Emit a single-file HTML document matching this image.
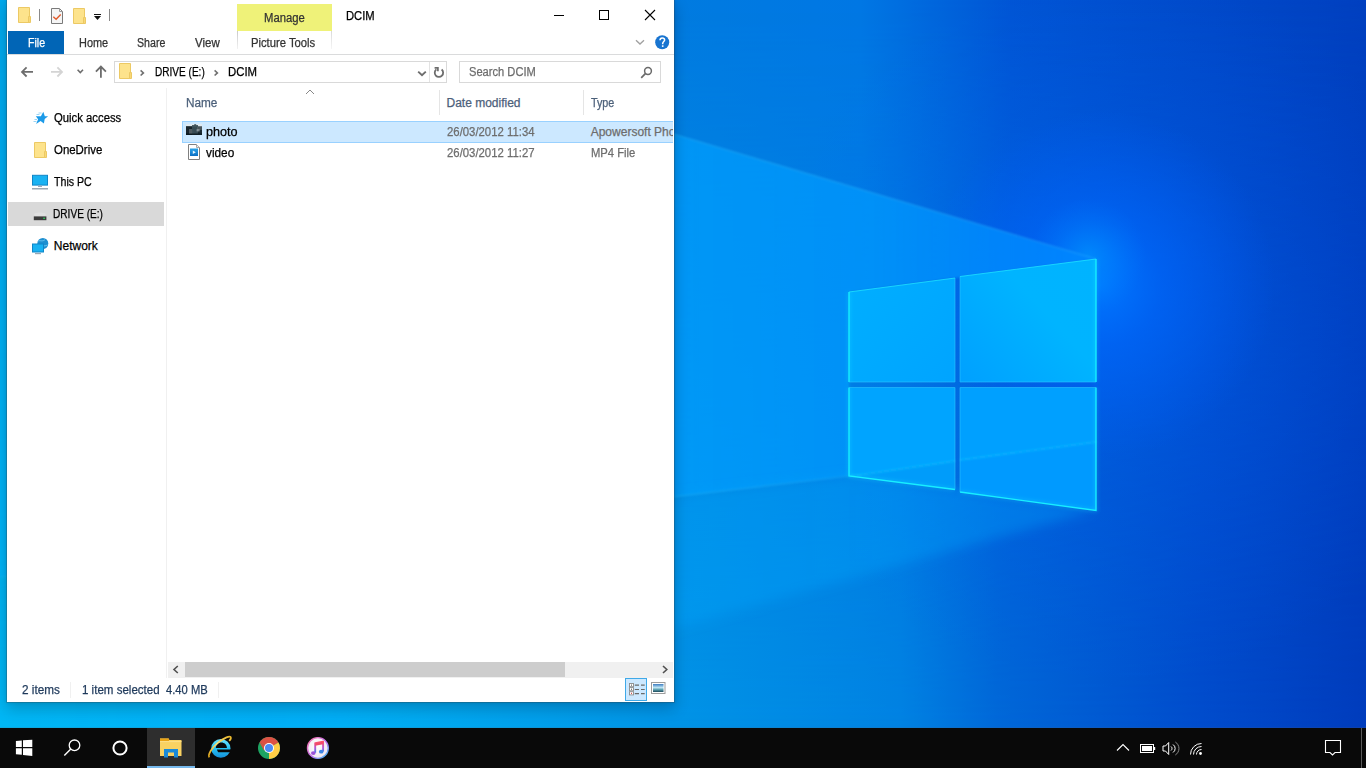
<!DOCTYPE html><html><head><meta charset="utf-8"><style>
*{margin:0;padding:0;box-sizing:border-box}
html,body{width:1366px;height:768px;overflow:hidden}
body{position:relative;font-family:"Liberation Sans",sans-serif;background:#0a5fd0}
.t{position:absolute;white-space:nowrap;line-height:12px;font-size:12px;transform-origin:0 0;-webkit-text-stroke:0.25px currentColor}
.a{position:absolute}
svg{position:absolute;overflow:visible}
</style></head><body>
<svg width="1366" height="728" viewBox="0 0 1366 728" style="left:0;top:0">
<defs>
 <linearGradient id="gTop" x1="0" y1="0" x2="1366" y2="0" gradientUnits="userSpaceOnUse">
  <stop offset="0" stop-color="#009cd8"/>
  <stop offset="0.49" stop-color="#007be0"/>
  <stop offset="0.63" stop-color="#0077e4"/>
  <stop offset="0.74" stop-color="#0055d5"/>
  <stop offset="1" stop-color="#0040c0"/>
 </linearGradient>
 <linearGradient id="gBot" x1="0" y1="0" x2="1366" y2="0" gradientUnits="userSpaceOnUse">
  <stop offset="0" stop-color="#00bcf2"/>
  <stop offset="0.25" stop-color="#00b0f4"/>
  <stop offset="0.49" stop-color="#0094e6"/>
  <stop offset="0.66" stop-color="#0082e2"/>
  <stop offset="0.73" stop-color="#0068d8"/>
  <stop offset="0.88" stop-color="#004ccc"/>
  <stop offset="1" stop-color="#003cbc"/>
 </linearGradient>
 <linearGradient id="mV" x1="0" y1="0" x2="0" y2="728" gradientUnits="userSpaceOnUse">
  <stop offset="0" stop-color="#fff" stop-opacity="0"/>
  <stop offset="1" stop-color="#fff" stop-opacity="1"/>
 </linearGradient>
 <mask id="mask1"><rect width="1366" height="728" fill="url(#mV)"/></mask>
 <radialGradient id="glow" cx="1100" cy="285" r="175" gradientUnits="userSpaceOnUse">
  <stop offset="0" stop-color="#0078ff" stop-opacity="1"/>
  <stop offset="0.35" stop-color="#0068ff" stop-opacity="0.6"/>
  <stop offset="1" stop-color="#0060ff" stop-opacity="0"/>
 </radialGradient>
 <radialGradient id="glow2" cx="1110" cy="330" r="360" gradientUnits="userSpaceOnUse">
  <stop offset="0" stop-color="#0070ff" stop-opacity="0.3"/>
  <stop offset="1" stop-color="#0060ff" stop-opacity="0"/>
 </radialGradient>
 <radialGradient id="glow3" cx="1088" cy="256" r="58" gradientUnits="userSpaceOnUse">
  <stop offset="0" stop-color="#00a0ff" stop-opacity="0.55"/>
  <stop offset="1" stop-color="#0080ff" stop-opacity="0"/>
 </radialGradient>
 <linearGradient id="beam1" x1="1096" y1="0" x2="0" y2="0" gradientUnits="userSpaceOnUse">
  <stop offset="0" stop-color="#0084ff" stop-opacity="0.85"/>
  <stop offset="0.2" stop-color="#009aff" stop-opacity="0.72"/>
  <stop offset="1" stop-color="#00b2ff" stop-opacity="0.55"/>
 </linearGradient>
 <linearGradient id="beam2" x1="1096" y1="0" x2="0" y2="0" gradientUnits="userSpaceOnUse">
  <stop offset="0" stop-color="#00a8ff" stop-opacity="0.35"/>
  <stop offset="1" stop-color="#00a8ff" stop-opacity="0.25"/>
 </linearGradient>
 <filter id="blur1" x="-10%" y="-10%" width="120%" height="120%"><feGaussianBlur stdDeviation="1.2"/></filter>
 <filter id="blur2" x="-10%" y="-10%" width="120%" height="120%"><feGaussianBlur stdDeviation="6"/></filter>
 <filter id="glowf" x="-10%" y="-10%" width="120%" height="120%"><feGaussianBlur stdDeviation="2"/></filter>
</defs>
<rect width="1366" height="728" fill="url(#gTop)"/>
<rect width="1366" height="728" fill="url(#gBot)" mask="url(#mask1)"/>
<rect width="1366" height="728" fill="url(#glow2)"/>
<rect width="1366" height="728" fill="url(#glow)"/>
<rect width="1366" height="728" fill="url(#glow3)"/>
<polygon points="1096,259 -20,-71 -20,579.4 849,476 849,292" fill="url(#beam1)" filter="url(#blur1)"/>
<polygon points="849,476 -20,579.4 -20,822.6 1096,510 955,489.5" fill="url(#beam2)" filter="url(#blur2)"/>
<path d="M1096,259 L0,-65" stroke="#40c8ff" stroke-width="1.2" opacity="0.35" filter="url(#blur1)"/>
<path d="M849,476 L0,577" stroke="#40c8ff" stroke-width="1.2" opacity="0.3" filter="url(#blur1)"/>
<!-- logo panes -->
<defs>
 <linearGradient id="pTR" x1="960" y1="382" x2="1096" y2="259" gradientUnits="userSpaceOnUse"><stop offset="0" stop-color="#00a0ff"/><stop offset="0.6" stop-color="#00b4ff"/><stop offset="1" stop-color="#00b3ff"/></linearGradient>
 <linearGradient id="pTL" x1="849" y1="292" x2="955" y2="382" gradientUnits="userSpaceOnUse"><stop offset="0" stop-color="#00aeff"/><stop offset="1" stop-color="#00a4ff"/></linearGradient>
</defs>
<polygon points="849,292 955,278 955,382 849,382" fill="url(#pTL)"/>
<polygon points="960,276.5 1096,259 1096,382 960,382" fill="url(#pTR)"/>
<polygon points="849,387.5 955,387.5 955,489.5 849,476" fill="#00a4ff"/>
<polygon points="960,387.5 1096,387.5 1096,510.5 960,492" fill="#00a0ff"/>
<polygon points="849,476 955,460.5 955,489.5" fill="#009cfa"/>
<polygon points="960,459.7 1096,441.5 1096,510.5 960,492" fill="#009aff"/>
<g stroke="#10beff" stroke-width="1.4" opacity="0.8" filter="url(#blur1)">
 <path d="M849,476.5 L955,461 M960,460 L1096,442"/>
</g>
<g fill="none" stroke="#20f0ff" stroke-width="2" filter="url(#glowf)" opacity="0.4">
 <path d="M849,382 V292 M1096,259 V382 M849,387.5 V476 L955,489.5 M960,492 L1096,510.5 V387.5"/>
</g>
<g fill="none" stroke="#18eeff" stroke-width="1.4">
 <path d="M849,382 V292 M1096,259 V382 M849,387.5 V476 L955,489.5 M960,492 L1096,510.5 V387.5"/>
</g>
<g fill="none" stroke="#20e8ff" stroke-width="1.1" opacity="0.75">
 <path d="M849,292 L955,278 M960,276.5 L1096,259"/>
</g>
<g fill="none" stroke="#30c8ff" stroke-width="1" opacity="0.55">
 <polyline points="955,278 955,382 849,382"/>
 <polyline points="960,276.5 960,382 1096,382"/>
 <polyline points="849,387.5 955,387.5 955,489.5"/>
 <polyline points="960,492 960,387.5 1096,387.5"/>
</g>
</svg>
<div class="a" style="left:6px;top:-1px;width:669px;height:704px;border:1px solid rgba(60,60,60,0.25);background:#fff;background-clip:padding-box;box-shadow:0 6px 14px rgba(0,0,0,0.2),0 0 3px rgba(0,0,0,0.08)"></div>
<!-- QAT -->
<svg width="16" height="17" style="left:17px;top:6px" viewBox="0 0 16 17">
 <path d="M1.5,1.5 h11 v15 h-11 z" fill="#fde38c" stroke="#ecc964" stroke-width="1"/>
 <path d="M11.5,10.5 h2 v6 h-2 z" fill="#f9d877" stroke="#ecc964" stroke-width="1"/>
</svg>
<div class="a" style="left:39px;top:9px;width:1px;height:12px;background:#8a8a8a"></div>
<svg width="14" height="17" style="left:50px;top:7px" viewBox="0 0 14 17">
 <path d="M1.5,1.5 h8 l3,3 v12 h-11 z" fill="#f5f5f5" stroke="#7a7a7a" stroke-width="1"/>
 <path d="M9.5,1.5 v3 h3" fill="none" stroke="#9a9a9a" stroke-width="1"/>
 <path d="M3.3,9.8 l2.8,2.4 l4.6,-4.8" fill="none" stroke="#e05a2a" stroke-width="1.4"/>
</svg>
<svg width="16" height="17" style="left:72px;top:7px" viewBox="0 0 16 17">
 <path d="M1.5,1.5 h11 v15 h-11 z" fill="#fde38c" stroke="#ecc964" stroke-width="1"/>
 <path d="M11.5,10.5 h2 v6 h-2 z" fill="#f9d877" stroke="#ecc964" stroke-width="1"/>
</svg>
<div class="a" style="left:94px;top:14px;width:7px;height:1px;background:#111"></div>
<svg width="8" height="5" style="left:94px;top:16px" viewBox="0 0 8 5"><path d="M0,0 h7 l-3.5,4 z" fill="#111"/></svg>
<div class="a" style="left:109px;top:9px;width:1px;height:12px;background:#8a8a8a"></div>

<!-- Manage contextual tab -->
<div class="a" style="left:237px;top:4px;width:95px;height:27px;background:#eff279"></div>
<div class="a" style="left:237px;top:31px;width:1px;height:18px;background:linear-gradient(#c9c9c9,#f2f2f2)"></div>
<div class="a" style="left:331px;top:31px;width:1px;height:18px;background:linear-gradient(#d9d9d9,#f6f6f6)"></div>

<!-- window controls -->
<div class="a" style="left:554px;top:15px;width:10px;height:1px;background:#000"></div>
<div class="a" style="left:599px;top:10px;width:10px;height:10px;border:1px solid #000"></div>
<svg width="12" height="12" style="left:644px;top:9px" viewBox="0 0 12 12"><path d="M1,1 L11,11 M11,1 L1,11" stroke="#000" stroke-width="1.1"/></svg>

<!-- File tab -->
<div class="a" style="left:8px;top:31px;width:56px;height:23px;background:#0165b6"></div>
<!-- ribbon line -->
<div class="a" style="left:7px;top:54px;width:667px;height:1px;background:#dadbdc"></div>
<!-- collapse chevron -->
<svg width="10" height="6" style="left:635px;top:39px" viewBox="0 0 10 6"><path d="M1,1.2 L5,5 L9,1.2" fill="none" stroke="#a0a0a0" stroke-width="1.3"/></svg>
<!-- help -->
<svg width="15" height="15" style="left:655px;top:35px" viewBox="0 0 15 15">
 <circle cx="7.2" cy="7.2" r="7" fill="#1874d0"/>
 <path d="M5,5.3 C5,3.6 6.1,3 7.3,3 C8.6,3 9.6,3.8 9.6,5 C9.6,6.5 7.7,6.6 7.7,8.5 L7.7,9.2" fill="none" stroke="#fff" stroke-width="1.5"/>
 <rect x="6.9" y="10.3" width="1.6" height="1.6" fill="#fff"/>
</svg>

<!-- nav buttons -->
<svg width="14" height="12" style="left:20px;top:66px" viewBox="0 0 14 12"><path d="M13,5.9 H2.5 M6.6,1.3 L2,5.9 L6.6,10.5" fill="none" stroke="#6d6d6d" stroke-width="1.8"/></svg>
<svg width="14" height="12" style="left:50px;top:66px" viewBox="0 0 14 12"><path d="M1,5.9 H11.5 M7.4,1.3 L12,5.9 L7.4,10.5" fill="none" stroke="#d4d4d4" stroke-width="1.8"/></svg>
<svg width="8" height="6" style="left:76px;top:68px" viewBox="0 0 8 6"><path d="M1.6,1.8 L4.3,4.5 L7,1.8" fill="none" stroke="#6d6d6d" stroke-width="1.6"/></svg>
<svg width="13" height="14" style="left:94px;top:65px" viewBox="0 0 13 14"><path d="M6.9,12.8 V2.2 M1.9,6.6 L6.9,1.6 L11.9,6.6" fill="none" stroke="#6d6d6d" stroke-width="1.8"/></svg>

<!-- address box -->
<div class="a" style="left:114px;top:61px;width:333px;height:22px;border:1px solid #d9d9d9"></div>
<div class="a" style="left:429px;top:62px;width:1px;height:20px;background:#e3e3e3"></div>
<svg width="16" height="17" style="left:118px;top:62px" viewBox="0 0 16 17">
 <path d="M1.5,1.5 h11 v15 h-11 z" fill="#fde38c" stroke="#ecc964" stroke-width="1"/>
 <path d="M11.5,10.5 h2 v6 h-2 z" fill="#f9d877" stroke="#ecc964" stroke-width="1"/>
</svg>
<svg width="6" height="8" style="left:139px;top:69px" viewBox="0 0 6 8"><path d="M1.6,1.3 L4.4,3.9 L1.6,6.5" fill="none" stroke="#707070" stroke-width="1.6"/></svg>
<svg width="6" height="8" style="left:213px;top:69px" viewBox="0 0 6 8"><path d="M1.6,1.3 L4.4,3.9 L1.6,6.5" fill="none" stroke="#707070" stroke-width="1.6"/></svg>
<svg width="10" height="7" style="left:417px;top:70px" viewBox="0 0 10 7"><path d="M1.2,1.6 L5,5.2 L8.8,1.6" fill="none" stroke="#6d6d6d" stroke-width="1.9"/></svg>
<svg width="12" height="12" style="left:433px;top:66px" viewBox="0 0 12 12">
 <path d="M3.4,3.4 A4.2,4.2 0 1 0 8.6,3.5" fill="none" stroke="#6d6d6d" stroke-width="1.8"/>
 <path d="M1.6,1.9 L4.9,1.9 L4.9,5.2" fill="none" stroke="#6d6d6d" stroke-width="1.7"/>
</svg>

<!-- search box -->
<div class="a" style="left:459px;top:61px;width:202px;height:22px;border:1px solid #d9d9d9"></div>
<svg width="13" height="13" style="left:640px;top:66px" viewBox="0 0 13 13">
 <circle cx="8" cy="5" r="3.4" fill="none" stroke="#6a6a6a" stroke-width="1.5"/>
 <path d="M5.6,7.4 L1.2,11.8" stroke="#6a6a6a" stroke-width="1.7"/>
</svg>

<!-- nav pane divider -->
<div class="a" style="left:166px;top:88px;width:1px;height:590px;background:#f0f0f0"></div>
<!-- DRIVE selected -->
<div class="a" style="left:8px;top:202px;width:156px;height:24px;background:#d9d9d9"></div>
<!-- star -->
<svg width="18" height="16" style="left:32px;top:110px" viewBox="0 0 18 16">
 <defs><linearGradient id="starg" x1="0" y1="0" x2="0" y2="1"><stop offset="0" stop-color="#1a98e6"/><stop offset="1" stop-color="#1590dd"/></linearGradient></defs>
 <path d="M11.3,1.8 L12.8,6.2 L16.1,6.2 L12.7,9.1 L11.9,13.4 L8.6,11 L4.1,13.9 L6.1,9.3 L3.8,6.2 L8.9,6.2 Z" fill="#1b9ae8"/>
 <path d="M6.5,3 H9.5 M4.5,4.5 H7.5 M2.5,9.5 H5 M1.5,11.5 H4.5" stroke="#8fd0f4" stroke-width="0.9"/>
</svg>
<!-- onedrive folder -->
<svg width="16" height="17" style="left:33px;top:141px" viewBox="0 0 16 17">
 <path d="M1.5,1.5 h11 v15 h-11 z" fill="#fde38c" stroke="#ecc964" stroke-width="1"/>
 <path d="M11.5,10.5 h2 v6 h-2 z" fill="#f9d877" stroke="#ecc964" stroke-width="1"/>
</svg>
<!-- this pc -->
<svg width="18" height="17" style="left:31px;top:174px" viewBox="0 0 18 17">
 <rect x="1.5" y="1.3" width="15" height="9.8" fill="#19b2f2" stroke="#0f86c8" stroke-width="1"/>
 <rect x="7" y="11.5" width="4" height="1.5" fill="#9ab"/>
 <rect x="1" y="14" width="16" height="1.5" fill="#9aa8b4"/>
</svg>
<!-- drive -->
<svg width="16" height="10" style="left:32px;top:211px" viewBox="0 0 16 10">
 <ellipse cx="8" cy="3.5" rx="6" ry="2" fill="#e0e0e0"/>
 <rect x="1.8" y="5.4" width="12.6" height="3.8" fill="#3c3c3c"/>
 <rect x="11.3" y="6.6" width="1.6" height="1.4" fill="#2fd05a"/>
</svg>
<!-- network -->
<svg width="18" height="18" style="left:31px;top:237px" viewBox="0 0 18 18">
 <circle cx="11.8" cy="6.5" r="5.5" fill="#1e8fd0"/>
 <path d="M7,4 C9,3 12,5 14,2.5 M9,9 C11,8 13,10 16.5,8" stroke="#6cc6f0" stroke-width="1" fill="none"/>
 <rect x="1.5" y="7" width="11" height="8" fill="#19b2f2" stroke="#0f86c8" stroke-width="1"/>
 <rect x="4" y="16" width="6" height="1.2" fill="#9aa8b4"/>
</svg>

<!-- column headers -->
<svg width="10" height="6" style="left:305px;top:89px" viewBox="0 0 10 6"><path d="M1,5 L5,1 L9,5" fill="none" stroke="#888" stroke-width="1"/></svg>
<div class="a" style="left:439px;top:90px;width:1px;height:25px;background:#e5e5e5"></div>
<div class="a" style="left:583px;top:90px;width:1px;height:25px;background:#e5e5e5"></div>

<!-- selected row -->
<div class="a" style="left:182px;top:121px;width:491px;height:22px;background:#cce8ff;border:1px solid #99d1ff;border-right:none"></div>
<!-- photo thumbnail -->
<svg width="16" height="12" style="left:186px;top:123px" viewBox="0 0 16 12">
 <rect x="0" y="1" width="16" height="3" fill="#dfe9f0"/>
 <rect x="0" y="3.4" width="16" height="8.4" fill="#1d2c34"/>
 <rect x="0" y="3.4" width="6" height="8.4" fill="#18242c"/>
 <rect x="3" y="6" width="4.5" height="5" fill="#7d868c" opacity="0.55"/>
 <rect x="6" y="2" width="6" height="9.8" fill="#3a4e56" opacity="0.9"/>
 <rect x="8.2" y="1.2" width="2" height="3" fill="#40545c"/>
 <rect x="11" y="4" width="5" height="3" fill="#5a646a" opacity="0.7"/>
 <rect x="10.6" y="6.2" width="3" height="2.2" fill="#b8c2c8" opacity="0.6"/>
 <rect x="0" y="10.6" width="16" height="1.2" fill="#07151c"/>
</svg>
<!-- video doc -->
<svg width="13" height="17" style="left:188px;top:144px" viewBox="0 0 13 17">
 <path d="M0.5,0.5 h8 l3,3 v12 h-11 z" fill="#fff" stroke="#808080" stroke-width="1"/>
 <path d="M8.5,0.5 v3 h3" fill="#eee" stroke="#a8a8a8" stroke-width="1"/>
 <defs><linearGradient id="vb" x1="0" y1="0" x2="0" y2="1"><stop offset="0" stop-color="#2aa4ea"/><stop offset="1" stop-color="#0c6fc4"/></linearGradient></defs>
 <rect x="2" y="4.5" width="8" height="7.5" fill="url(#vb)"/>
 <path d="M4.8,6.6 L7.8,8.3 L4.8,10 Z" fill="#e8f6ff"/>
</svg>

<!-- scrollbar -->
<div class="a" style="left:168px;top:662px;width:505px;height:16px;background:#f0f0f0"></div>
<div class="a" style="left:185px;top:662px;width:380px;height:15px;background:#cdcdcd"></div>
<svg width="8" height="9" style="left:172px;top:665px" viewBox="0 0 8 9"><path d="M5.8,1 L2,4.5 L5.8,8" fill="none" stroke="#505050" stroke-width="1.6"/></svg>
<svg width="8" height="9" style="left:661px;top:665px" viewBox="0 0 8 9"><path d="M2,1 L5.8,4.5 L2,8" fill="none" stroke="#505050" stroke-width="1.6"/></svg>

<!-- status separators -->
<div class="a" style="left:70px;top:682px;width:1px;height:16px;background:#f0f0f0"></div>
<div class="a" style="left:218px;top:682px;width:1px;height:16px;background:#f0f0f0"></div>
<!-- view buttons -->
<div class="a" style="left:625px;top:678px;width:22px;height:23px;background:#cce8ff;border:1px solid #3fa9e8"></div>
<svg width="17" height="13" style="left:628px;top:682px" viewBox="0 0 17 13">
 <rect x="1.5" y="1.5" width="4" height="3.2" fill="#fff" stroke="#8a8a8a" stroke-width="0.9"/>
 <rect x="1.5" y="5.6" width="4" height="3.2" fill="#fff" stroke="#8a8a8a" stroke-width="0.9"/>
 <rect x="1.5" y="9.7" width="4" height="3.2" fill="#fff" stroke="#8a8a8a" stroke-width="0.9"/>
 <rect x="3" y="2.6" width="1" height="1" fill="#444"/><rect x="3" y="6.7" width="1" height="1" fill="#444"/><rect x="3" y="10.8" width="1" height="1" fill="#d03030"/>
 <path d="M6.8,3.1 H11 M13,3.1 H16.7 M6.8,7.5 H11 M13,7.5 H16.7 M6.8,11.6 H11 M13,11.6 H16.7" stroke="#6a6a6a" stroke-width="1.2"/>
</svg>
<svg width="15" height="12" style="left:651px;top:682px" viewBox="0 0 15 12">
 <defs><linearGradient id="li" x1="0" y1="0" x2="0" y2="1"><stop offset="0" stop-color="#3c7cc0"/><stop offset="0.45" stop-color="#bfe6f4"/><stop offset="0.7" stop-color="#5aa0b0"/><stop offset="1" stop-color="#1e4a5a"/></linearGradient></defs>
 <rect x="0.5" y="0.5" width="13.5" height="11" fill="#fff" stroke="#9c9c9c" stroke-width="1"/>
 <rect x="2" y="2" width="10.5" height="8" fill="url(#li)"/>
</svg>
<div class="t" style="left:345.60px;top:10.00px;color:#000;font-size:12px;transform:scaleX(0.9349);">DCIM</div>
<div class="t" style="left:263.70px;top:12.00px;color:#333;font-size:12px;transform:scaleX(0.9401);">Manage</div>
<div class="t" style="left:27.60px;top:37.00px;color:#fff;font-size:12px;transform:scaleX(0.8860);">File</div>
<div class="t" style="left:78.50px;top:37.00px;color:#333;font-size:12px;transform:scaleX(0.9094);">Home</div>
<div class="t" style="left:137.40px;top:37.00px;color:#333;font-size:12px;transform:scaleX(0.8844);">Share</div>
<div class="t" style="left:195.30px;top:37.00px;color:#333;font-size:12px;transform:scaleX(0.9574);">View</div>
<div class="t" style="left:251.40px;top:37.00px;color:#333;font-size:12px;transform:scaleX(0.9372);">Picture Tools</div>
<div class="t" style="left:154.70px;top:66.00px;color:#000;font-size:12px;transform:scaleX(0.8381);">DRIVE (E:)</div>
<div class="t" style="left:228.30px;top:66.00px;color:#000;font-size:12px;transform:scaleX(0.9479);">DCIM</div>
<div class="t" style="left:468.50px;top:66.00px;color:#6d6d6d;font-size:12px;transform:scaleX(0.9278);">Search DCIM</div>
<div class="t" style="left:185.70px;top:97.00px;color:#4c607a;font-size:12px;transform:scaleX(0.9812);">Name</div>
<div class="t" style="left:446.50px;top:97.00px;color:#4c607a;font-size:12px;">Date modified</div>
<div class="t" style="left:590.70px;top:97.00px;color:#4c607a;font-size:12px;transform:scaleX(0.8962);">Type</div>
<div class="t" style="left:206.30px;top:126.00px;color:#000;font-size:12px;transform:scaleX(1.0500);">photo</div>
<div class="t" style="left:446.50px;top:126.00px;color:#6d6d6d;font-size:12px;transform:scaleX(0.9459);">26/03/2012 11:34</div>
<div class="t" style="left:206.30px;top:147.00px;color:#000;font-size:12px;transform:scaleX(0.9826);">video</div>
<div class="t" style="left:446.50px;top:147.00px;color:#6d6d6d;font-size:12px;transform:scaleX(0.9459);">26/03/2012 11:27</div>
<div class="t" style="left:590.70px;top:147.00px;color:#6d6d6d;font-size:12px;transform:scaleX(0.9366);">MP4 File</div>
<div class="t" style="left:53.50px;top:112.00px;color:#000;font-size:12px;transform:scaleX(0.9426);">Quick access</div>
<div class="t" style="left:53.50px;top:144.00px;color:#000;font-size:12px;transform:scaleX(0.9527);">OneDrive</div>
<div class="t" style="left:53.80px;top:176.00px;color:#000;font-size:12px;transform:scaleX(0.8852);">This PC</div>
<div class="t" style="left:53.40px;top:208.00px;color:#000;font-size:12px;transform:scaleX(0.8415);">DRIVE (E:)</div>
<div class="t" style="left:53.80px;top:240.00px;color:#000;font-size:12px;">Network</div>
<div class="t" style="left:22.30px;top:684.00px;color:#1e395b;font-size:12px;transform:scaleX(0.9767);">2 items</div>
<div class="t" style="left:81.70px;top:684.00px;color:#1e395b;font-size:12px;transform:scaleX(0.9616);">1 item selected</div>
<div class="t" style="left:166.00px;top:684.00px;color:#1e395b;font-size:12px;transform:scaleX(0.9329);">4.40 MB</div>
<div class="a" style="left:586px;top:120px;width:87px;height:22px;overflow:hidden"><div class="t" style="left:4.70px;top:6px;color:#6d6d6d;transform:scaleX(1.0)">Apowersoft Photo Viewer</div></div>
<div class="a" style="left:0;top:727px;width:1366px;height:1px;background:rgba(90,90,90,0.14)"></div>
<div class="a" style="left:0;top:728px;width:1366px;height:40px;background:#090909"></div>
<!-- start -->
<svg width="18" height="18" style="left:15px;top:739px" viewBox="0 0 18 18">
 <path d="M0.9,2.1 L6.8,1.5 V7.9 H0.9 Z M8,1.3 L17.3,0.8 V7.9 H8 Z M0.9,9.2 H6.8 V15.7 L0.9,15.2 Z M8,9.2 H17.3 V17.1 L8,16 Z" fill="#fff"/>
</svg>
<!-- search -->
<svg width="20" height="20" style="left:62px;top:738px" viewBox="0 0 20 20">
 <circle cx="12.5" cy="7.3" r="5.3" fill="none" stroke="#fff" stroke-width="1.3"/>
 <path d="M8.8,11 L2.3,17.6" stroke="#fff" stroke-width="1.4"/>
</svg>
<!-- cortana -->
<svg width="18" height="18" style="left:111px;top:739px" viewBox="0 0 18 18">
 <circle cx="9" cy="9" r="6.6" fill="none" stroke="#fff" stroke-width="2"/>
</svg>
<!-- explorer active -->
<div class="a" style="left:147px;top:728px;width:48px;height:40px;background:#2e2e2e"></div>
<div class="a" style="left:147px;top:766px;width:48px;height:2px;background:#76b9ed"></div>
<svg width="24" height="22" style="left:159px;top:737px" viewBox="0 0 24 22">
 <path d="M1,1.5 H9.5 L10.5,3 H22.5 V19 H1 Z" fill="#f9d262"/>
 <rect x="1" y="1.5" width="9" height="2.6" fill="#e9a416"/>
 <rect x="1" y="4.1" width="21.5" height="1" fill="#fde08a"/>
 <path d="M5,12 H19 V20.5 H15 V15.5 H9 V20.5 H5 Z" fill="#1a8ad8"/>
</svg>
<!-- IE -->
<svg width="28" height="28" style="left:206px;top:734px" viewBox="0 0 28 28">
 <defs>
  <linearGradient id="ieg" x1="0" y1="0" x2="0" y2="1"><stop offset="0" stop-color="#6fe4fb"/><stop offset="0.5" stop-color="#27c2f2"/><stop offset="1" stop-color="#1590da"/></linearGradient>
  <linearGradient id="ier" x1="0" y1="1" x2="1" y2="0"><stop offset="0" stop-color="#d9a21a"/><stop offset="0.5" stop-color="#ffe070"/><stop offset="1" stop-color="#e7b52a"/></linearGradient>
 </defs>
 <ellipse cx="14.85" cy="14.4" rx="9.65" ry="9.4" fill="url(#ieg)"/>
 <path d="M9.8,13.9 H20.9 C20.8,10.6 18.4,8.4 15.3,8.4 C12.3,8.4 10,10.5 9.8,13.9 Z" fill="#090909"/>
 <path d="M11,15.6 H25 V18.3 H12.3 C11.6,17.6 11.2,16.7 11,15.6 Z" fill="#090909"/>
 <path d="M3.4,23.4 C1.4,21.2 5.6,13.6 12.4,8.4 C18.6,3.6 23.6,1.6 24.7,3.1 C25.3,4 24.6,5.4 23.2,6.9" fill="none" stroke="url(#ier)" stroke-width="1.7"/>
</svg>
<!-- chrome -->
<svg width="24" height="24" style="left:257px;top:736px" viewBox="0 0 24 24">
 <circle cx="12" cy="12" r="11" fill="#1da462"/>
 <path d="M12,12 L2.5,6.5 A11,11 0 0 1 21.5,6.5 Z" fill="#dd5144"/>
 <path d="M12,12 L21.5,6.5 A11,11 0 0 1 12,23 Z" fill="#ffcd46"/>
 <path d="M12,12 L2.5,6.5 L7,14.5 Z" fill="#dd5144"/>
 <path d="M12,12 L12,23 L16.5,15 Z" fill="#ffcd46"/>
 <circle cx="12" cy="12" r="5" fill="#fff"/>
 <circle cx="12" cy="12" r="4" fill="#4c8bf5"/>
</svg>
<!-- itunes -->
<svg width="24" height="24" style="left:306px;top:736px" viewBox="0 0 24 24">
 <defs>
  <linearGradient id="itb" x1="0" y1="0" x2="1" y2="1"><stop offset="0" stop-color="#ff7aa8"/><stop offset="0.55" stop-color="#c070f0"/><stop offset="1" stop-color="#30c8f8"/></linearGradient>
  <linearGradient id="itn" x1="0" y1="0" x2="0" y2="1"><stop offset="0" stop-color="#ff4f68"/><stop offset="0.55" stop-color="#b458d8"/><stop offset="1" stop-color="#3a7fe8"/></linearGradient>
  <radialGradient id="itf" cx="0.45" cy="0.4" r="0.6"><stop offset="0" stop-color="#ffffff"/><stop offset="1" stop-color="#eee6f0"/></radialGradient>
 </defs>
 <circle cx="11.9" cy="12" r="10.4" fill="url(#itf)" stroke="url(#itb)" stroke-width="1.4"/>
 <path d="M9.2,16.8 V7.2 L17.1,5.7 V15.4" fill="none" stroke="url(#itn)" stroke-width="1.9" stroke-linejoin="round"/>
 <path d="M9.2,7.2 L17.1,5.7 V8.2 L9.2,9.7 Z" fill="#f24a6a"/>
 <ellipse cx="7.3" cy="17.1" rx="2.3" ry="1.9" fill="#9a50d8"/>
 <ellipse cx="15.2" cy="15.7" rx="2.3" ry="1.9" fill="#3c86e6"/>
</svg>
<!-- tray -->
<svg width="14" height="9" style="left:1116px;top:743px" viewBox="0 0 14 9"><path d="M1,7.5 L7,1.5 L13,7.5" fill="none" stroke="#fff" stroke-width="1.1"/></svg>
<svg width="17" height="11" style="left:1139px;top:744px" viewBox="0 0 17 11">
 <rect x="1.5" y="0.5" width="13" height="8" fill="none" stroke="#fff" stroke-width="1"/>
 <rect x="3" y="2" width="10" height="5" fill="#fff"/>
 <rect x="15" y="3" width="1.2" height="3" fill="#fff"/>
</svg>
<svg width="18" height="15" style="left:1162px;top:741px" viewBox="0 0 18 15">
 <path d="M1,5 H3.5 L6.7,1.5 V13.5 L3.5,10 H1 Z" fill="none" stroke="#fff" stroke-width="1"/>
 <path d="M9,5.5 A2.5,2.5 0 0 1 9,9.5" fill="none" stroke="#fff" stroke-width="1"/>
 <path d="M11,3.5 A4.8,4.8 0 0 1 11,11.5" fill="none" stroke="#fff" stroke-width="1"/>
 <path d="M13.3,1 A7.6,7.6 0 0 1 13.3,14" fill="none" stroke="#888" stroke-width="1"/>
</svg>
<svg width="14" height="14" style="left:1189px;top:742px" viewBox="0 0 14 14">
 <path d="M12.5,1.5 A11,11 0 0 0 1.5,12.5" fill="none" stroke="#fff" stroke-width="1"/>
 <path d="M12.5,4.5 A8,8 0 0 0 4.5,12.5" fill="none" stroke="#fff" stroke-width="1"/>
 <path d="M12.5,7.5 A5,5 0 0 0 7.5,12.5" fill="none" stroke="#fff" stroke-width="1"/>
 <circle cx="11.5" cy="11.5" r="1.4" fill="#fff"/>
</svg>
<svg width="18" height="18" style="left:1324px;top:739px" viewBox="0 0 18 18">
 <path d="M1.5,1.5 H16.5 V13.5 H11 L8.5,16 L6,13.5 H1.5 Z" fill="none" stroke="#fff" stroke-width="1.1"/>
</svg>
<div class="a" style="left:1361px;top:728px;width:1px;height:40px;background:#5a5a5a"></div>
</body></html>
